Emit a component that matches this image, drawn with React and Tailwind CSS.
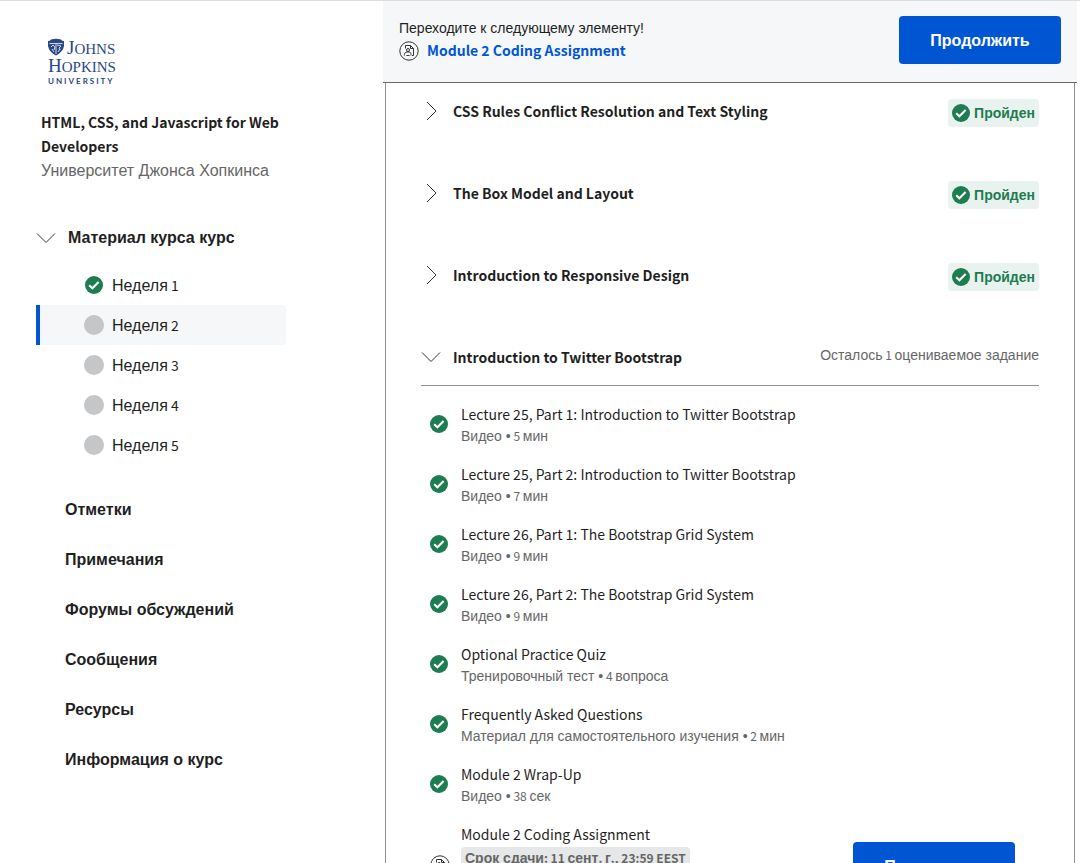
import React from 'react';

const LATIN = "font-['Noto_Sans_CJK_SC','Noto_Sans_CJK_JP',sans-serif]";

/* Latin letters and digits are set in a humanist face, Cyrillic in a grotesque one. */
function Mixed({ text, size = 'text-[14px]' }) {
  const parts = text.split(/([А-Яа-яЁё](?:[А-Яа-яЁё !•]*[А-Яа-яЁё!•])?)/).filter(Boolean);
  return parts.map((part, i) =>
    /[А-Яа-яЁё]/.test(part) ? (
      part
    ) : (
      <span key={i} className={`${LATIN} ${size} leading-none`}>
        {part}
      </span>
    )
  );
}

function Check({ className = '' }) {
  return (
    <svg viewBox="0 0 18 18" className={`size-[18px] shrink-0 ${className}`} aria-hidden="true">
      <circle cx="9" cy="9" r="9" fill="#1d7c50" />
      <path d="M4.2 9.3 7.4 12.2 13.6 6" fill="none" stroke="#fff" strokeWidth="2.1" />
    </svg>
  );
}

function Chevron({ open }) {
  return (
    <svg viewBox="0 0 20 20" className="size-5 shrink-0" fill="none" stroke="#333" strokeWidth="1" aria-hidden="true">
      <path d={open ? 'M1 5.5 10 14.5 19 5.5' : 'M6 1 15 10 6 19'} />
    </svg>
  );
}

function PeerIcon() {
  return (
    <svg viewBox="0 0 20 20" className="size-5 shrink-0" fill="none" stroke="#333" strokeWidth="1" aria-hidden="true">
      <circle cx="10" cy="10" r="9.2" />
      <path d="M6.500 7.500V4.500h5l3 3v7h-1.500M11.500 4.500v3h3" />
      <circle cx="9" cy="9" r="1.500" />
      <path d="M5.500 14.500v-1c0-1.500 1-2.500 2.500-2.500h2c1.500 0 2 1 2 2.500v1M7.500 14.500h3" />
    </svg>
  );
}

function Logo() {
  return (
    <svg viewBox="0 0 68 48" className="h-12 w-[68px]" fill="#2a4788" role="img" aria-label="Johns Hopkins University">
      <path d="M0 4Q2 4 3 2.500Q8 1 13 2.500Q14 4 16 4V9Q15 15 8 18.500Q1 15 0 9Z" />
      <path d="M1.500 6.500h13M3 10l2-2 2 2-1 3M9 8l4 1-2 2 1 2M8 7v10M4 12l2 3M12 12l-2 3" stroke="#e4e9f3" strokeWidth=".9" fill="none" />
      <g fontFamily="Liberation Serif, serif">
        <text x="19" y="17" fontSize="19">J<tspan fontSize="15">OHNS</tspan></text>
        <text x="0" y="35" fontSize="19">H<tspan fontSize="15">OPKINS</tspan></text>
      </g>
      <text x="0" y="47" fontSize="8" fontWeight="700" letterSpacing="2" fontFamily="Lato, sans-serif">UNIVERSITY</text>
    </svg>
  );
}

const weeks = ['Неделя 1', 'Неделя 2', 'Неделя 3', 'Неделя 4', 'Неделя 5'];
const links = ['Отметки', 'Примечания', 'Форумы обсуждений', 'Сообщения', 'Ресурсы', 'Информация о курс'];
const modules = ['CSS Rules Conflict Resolution and Text Styling', 'The Box Model and Layout', 'Introduction to Responsive Design'];
const items = [
  ['Lecture 25, Part 1: Introduction to Twitter Bootstrap', 'Видео • 5 мин'],
  ['Lecture 25, Part 2: Introduction to Twitter Bootstrap', 'Видео • 7 мин'],
  ['Lecture 26, Part 1: The Bootstrap Grid System', 'Видео • 9 мин'],
  ['Lecture 26, Part 2: The Bootstrap Grid System', 'Видео • 9 мин'],
  ['Optional Practice Quiz', 'Тренировочный тест • 4 вопроса'],
  ['Frequently Asked Questions', 'Материал для самостоятельного изучения • 2 мин'],
  ['Module 2 Wrap-Up', 'Видео • 38 сек'],
];

function Sidebar() {
  return (
    <aside className="w-[383px] shrink-0 pl-9 pt-9">
      <div className="pl-3">
        <Logo />
      </div>
      <div className="w-[250px] pl-[5px] pt-[26px] leading-6">
        <h1 className="font-bold"><Mixed text="HTML, CSS, and Javascript for Web Developers" /></h1>
        <p className="whitespace-nowrap text-[#666]">Университет Джонса Хопкинса</p>
      </div>
      <nav className="w-[250px]">
        <button type="button" className="mt-[43px] flex h-6 items-center gap-3 font-bold">
          <Chevron open />
          Материал курса курс
        </button>
        <ul className="mt-[15px]">
          {weeks.map((week, i) => (
            <li key={week}>
              <a
                href={`#week-${i + 1}`}
                className={`flex h-10 items-center gap-2 border-l-4 pl-11 ${i === 1 ? 'rounded-r border-[#0056d2] bg-[#f5f7f8]' : 'border-transparent'}`}
              >
                <span className="flex w-5 justify-center">
                  {i === 0 ? <Check /> : <span className="size-5 rounded-full bg-[#c4c6c8]" />}
                </span>
                <span className="pt-0.5"><Mixed text={week} /></span>
              </a>
            </li>
          ))}
        </ul>
        <ul className="mt-5 pl-[29px] font-bold">
          {links.map((link) => (
            <li key={link}>
              <a href="#" className="flex h-[50px] items-center">{link}</a>
            </li>
          ))}
        </ul>
      </nav>
    </aside>
  );
}

export default function App() {
  return (
    <div className="flex h-screen overflow-hidden border-t border-[#ddd] bg-white font-['Liberation_Sans',Arial,sans-serif] text-base text-[#1f1f1f]">
      <Sidebar />
      <main className="mr-[3px] min-w-0 flex-1">
        <header className="flex items-start justify-between border-b border-[#666] bg-[#f5f7f8] px-4 pb-[18px] pt-[15px]">
          <div>
            <p className="text-sm leading-6">Переходите к следующему элементу!</p>
            <a href="#assignment" className="mt-px flex items-center gap-2 font-bold leading-5 text-[#0056d2]">
              <PeerIcon />
              <span><Mixed text="Module 2 Coding Assignment" /></span>
            </a>
          </div>
          <button type="button" className="h-12 w-[162px] rounded bg-[#0056d2] pt-0.5 font-bold text-white">Продолжить</button>
        </header>
        <div className="mx-[2px] border-x border-[#8f8f96] px-[35px]">
          {modules.map((title) => (
            <section key={title} className="flex h-[82px] items-start justify-between pt-4">
              <button type="button" className="flex h-6 items-center gap-3 font-bold">
                <Chevron />
                <span className="pt-0.5"><Mixed text={title} /></span>
              </button>
              <span className="flex h-7 items-center gap-1 rounded bg-[#e8f2ee] px-1 text-sm font-bold text-[#1d7c50]">
                <Check />
                Пройден
              </span>
            </section>
          ))}
          <section>
            <div className="flex items-start justify-between border-b border-[#8f8f96] pb-4 pt-4">
              <button type="button" className="flex h-6 items-center gap-3 font-bold">
                <Chevron open />
                <span className="pt-0.5"><Mixed text="Introduction to Twitter Bootstrap" /></span>
              </button>
              <p className="text-sm leading-5 text-[#666]"><Mixed text="Осталось 1 оцениваемое задание" size="text-[12px]" /></p>
            </div>
            <ul className="pl-[9px] pt-[17px]">
              {items.map(([title, detail]) => (
                <li key={title} className="flex h-[60px] gap-[13px]">
                  <Check className="mt-3" />
                  <a href="#" className="block">
                    <span className="block leading-6"><Mixed text={title} /></span>
                    <span className="block text-sm leading-[18px] text-[#666]"><Mixed text={detail} size="text-[12px]" /></span>
                  </a>
                </li>
              ))}
              <li className="flex items-start">
                <div className="flex w-[31px] pt-8">
                  <PeerIcon />
                </div>
                <div>
                  <a href="#assignment" className="block leading-6"><Mixed text="Module 2 Coding Assignment" /></a>
                  <p className="rounded bg-[#e5e7e8] px-1 text-sm font-bold leading-[22px] text-[#666]">
                    <Mixed text="Срок сдачи: 11 сент. г., 23:59 EEST" size="text-[12px]" />
                  </p>
                </div>
                <button type="button" className="ml-auto mr-6 mt-[19px] h-12 w-[162px] rounded bg-[#0056d2] pt-0.5 font-bold text-white">Продолжить</button>
              </li>
            </ul>
          </section>
        </div>
      </main>
    </div>
  );
}
